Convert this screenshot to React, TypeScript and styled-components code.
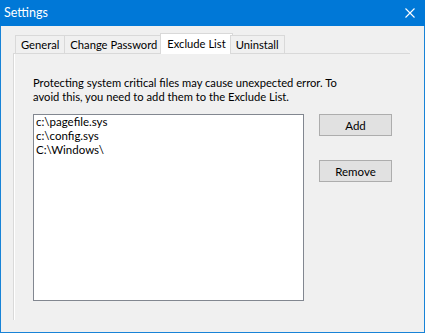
import React, { useState } from 'react'
import styled, { createGlobalStyle } from 'styled-components'

const GlobalStyle = createGlobalStyle`
  html, body {
    margin: 0;
    padding: 0;
    background: #f0f0f0;
  }
  body {
    font-family: Lato, "Liberation Sans", sans-serif;
    font-size: 11px;
    color: #000;
  }
`

const Window = styled.div`
  width: 425px;
  height: 333px;
  box-sizing: border-box;
  border: 1px solid #1883d7;
  border-top: none;
  display: flex;
  flex-direction: column;
  background: #f0f0f0;
`

const TitleBar = styled.div`
  height: 26px;
  flex: none;
  background: #0078d7;
  color: #fff;
  display: flex;
  align-items: center;
  justify-content: space-between;
  padding: 0 10px 0 4px;
  margin: 0 -1px;
`

const Title = styled.div`
  font-size: 12.5px;
  line-height: 14px;
`

const Body = styled.div`
  flex: 1;
  padding: 7px 14px 12px 12px;
  display: flex;
  flex-direction: column;
`

const TabStrip = styled.div`
  display: flex;
  align-items: flex-end;
  height: 21px;
  padding-left: 2px;
  position: relative;
  z-index: 1;
  margin-bottom: -1px;
`

const Tab = styled.div<{ $active?: boolean }>`
  box-sizing: border-box;
  height: ${p => (p.$active ? '21px' : '19px')};
  padding: ${p => (p.$active ? '0 6px 1px' : '0 5px')};
  margin: ${p => (p.$active ? '0 -2px 0 -3px' : '0 0 0 -1px')};
  border: 1px solid #d9d9d9;
  border-bottom: ${p => (p.$active ? 'none' : '1px solid #d9d9d9')};
  background: ${p => (p.$active ? '#fff' : '#f0f0f0')};
  display: flex;
  align-items: center;
  font-size: 11.2px;
  line-height: 14px;
  white-space: nowrap;
  &:first-child {
    margin-left: 0;
  }
`

const Panel = styled.div`
  flex: 1;
  border-top: 1px solid #d9d9d9;
  border-left: 1px solid #d9d9d9;
  box-shadow: inset 1px 0 0 #fff;
  padding: 22px 0 0 19px;
  display: flex;
  flex-direction: column;
`

const Message = styled.p`
  margin: 0;
  font-size: 11.2px;
  line-height: 14px;
  width: 310px;
`

const ListRow = styled.div`
  display: flex;
  margin-top: 10px;
`

const ListBox = styled.div`
  box-sizing: border-box;
  width: 271px;
  height: 187px;
  border: 1px solid #828790;
  background: #fff;
  padding: 0 2px;
`

const ListItem = styled.div<{ $selected?: boolean }>`
  font-size: 11.5px;
  line-height: 14px;
  white-space: nowrap;
  background: ${p => (p.$selected ? '#cce8ff' : 'transparent')};
  cursor: default;
`

const Buttons = styled.div`
  display: flex;
  flex-direction: column;
  gap: 24px;
  margin-left: 15px;
`

const Button = styled.button`
  box-sizing: border-box;
  width: 73px;
  height: 22px;
  border: 1px solid #adadad;
  background: #e1e1e1;
  font-family: inherit;
  font-size: 11.5px;
  color: #000;
  padding: 0;
  &:hover {
    background: #e5f1fb;
    border-color: #0078d7;
  }
`

const TABS = ['General', 'Change Password', 'Exclude List', 'Uninstall']
const FILES = ['c:\\pagefile.sys', 'c:\\config.sys', 'C:\\Windows\\']

export default function App() {
  const [tab, setTab] = useState('Exclude List')
  const [selected, setSelected] = useState<number | null>(null)
  return (
    <>
      <GlobalStyle />
      <Window>
        <TitleBar>
          <Title>Settings</Title>
          <svg width="10" height="10" viewBox="0 0 10 10">
            <path d="M0.5 0.5 L9.5 9.5 M9.5 0.5 L0.5 9.5" stroke="#fff" strokeWidth="1.1" />
          </svg>
        </TitleBar>
        <Body>
          <TabStrip>
            {TABS.map(t => (
              <Tab key={t} $active={t === tab} onClick={() => setTab(t)}>{t}</Tab>
            ))}
          </TabStrip>
          <Panel>
            <Message>
              Protecting system critical files may cause unexpected error. To avoid this, you need to add them to the Exclude List.
            </Message>
            <ListRow>
              <ListBox>
                {FILES.map((f, i) => (
                  <ListItem key={f} $selected={selected === i} onClick={() => setSelected(i)}>{f}</ListItem>
                ))}
              </ListBox>
              <Buttons>
                <Button>Add</Button>
                <Button>Remove</Button>
              </Buttons>
            </ListRow>
          </Panel>
        </Body>
      </Window>
    </>
  )
}
